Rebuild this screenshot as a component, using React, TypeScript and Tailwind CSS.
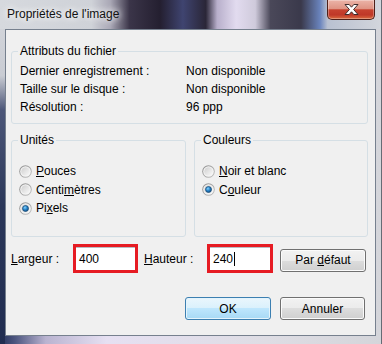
import { useId } from 'react';

const infoRows = [
  { label: 'Dernier enregistrement :', value: 'Non disponible' },
  { label: 'Taille sur le disque :', value: 'Non disponible' },
  { label: 'Résolution :', value: '96 ppp' },
];

function Radio({ checked }: { checked?: boolean }) {
  const id = useId().replace(/:/g, '');
  return (
    <svg width="13" height="13" viewBox="0 0 13 13" className="shrink-0">
      <defs>
        <linearGradient id={`${id}o`} x1="0" y1="0" x2="1" y2="1">
          <stop offset="0" stopColor="#8c8c8c" />
          <stop offset="1" stopColor="#c4c4c4" />
        </linearGradient>
        <linearGradient id={`${id}i`} x1="0" y1="0" x2="1" y2="1">
          <stop offset="0" stopColor="#cfcfcf" />
          <stop offset="1" stopColor="#fafafa" />
        </linearGradient>
        <radialGradient id={`${id}d`} cx="0.4" cy="0.35" r="0.7">
          <stop offset="0" stopColor="#86d4ff" />
          <stop offset="0.5" stopColor="#2783c9" />
          <stop offset="1" stopColor="#0e4a7e" />
        </radialGradient>
      </defs>
      <circle cx="6.5" cy="6.5" r="6.3" fill={`url(#${id}o)`} />
      <circle cx="6.5" cy="6.5" r="5.3" fill="#f6f6f6" />
      <circle cx="6.5" cy="6.5" r="4.3" fill={`url(#${id}i)`} />
      {checked && (
        <circle cx="6.5" cy="6.5" r="3" fill={`url(#${id}d)`} stroke="#1a4a74" strokeWidth="0.7" />
      )}
    </svg>
  );
}

function GroupBox({
  title,
  className = '',
  children,
}: {
  title: string;
  className?: string;
  children: React.ReactNode;
}) {
  return (
    <fieldset className={`min-w-0 rounded-[3px] border border-[#d5dfe5] pl-[6px] pr-2 ${className}`}>
      <legend className="px-[2px] leading-[15px]">{title}</legend>
      {children}
    </fieldset>
  );
}

function RadioRow({ checked, children }: { checked?: boolean; children: React.ReactNode }) {
  return (
    <div className="flex h-[18.5px] items-center gap-[4px] pl-[1px]">
      <Radio checked={checked} />
      <span>{children}</span>
    </div>
  );
}

function Button({
  primary,
  className = '',
  children,
}: {
  primary?: boolean;
  className?: string;
  children: React.ReactNode;
}) {
  return (
    <div
      className={`flex h-[23px] items-center justify-center rounded-[3px] border ${
        primary
          ? 'border-[#3c7fb1] bg-[linear-gradient(180deg,#eaf6fd_0%,#d9f0fc_50%,#bee6fd_50%,#a7d9f5_100%)] shadow-[inset_0_0_0_1px_#e4f4fc]'
          : 'border-[#707070] bg-[linear-gradient(180deg,#f2f2f2_0%,#ebebeb_50%,#dddddd_50%,#cfcfcf_100%)] shadow-[inset_0_0_0_1px_#fbfbfb]'
      } ${className}`}
    >
      <span>{children}</span>
    </div>
  );
}

function Field({ value, caret, className = '' }: { value: string; caret?: boolean; className?: string }) {
  return (
    <div
      className={`flex h-[29px] items-center border-[3px] border-[#e61b23] bg-white pl-[3px] shadow-[inset_0_1px_0_#b9bcc3] ${className}`}
    >
      <span>{value}</span>
      {caret && <span className="ml-[1px] inline-block h-[14px] w-px bg-black" />}
    </div>
  );
}

export default function App() {
  return (
    <div className="h-[344px] w-[382px] overflow-hidden border-r border-[#666b75] font-['Liberation_Sans',Arial,sans-serif] text-[12px] text-black [background:linear-gradient(180deg,#d6d8dd_0%,#c9ccd3_22%,#4c5678_32%,#2b3759_60%,#202c50_100%)_left_top/5px_100%_no-repeat,linear-gradient(90deg,#25325a_0%,#4d5680_4%,#b9b3d0_12%,#e6e0f2_28%,#dedde4_70%,#d4d5da_100%)]">
      <div className="flex h-[29px] items-start justify-between bg-[linear-gradient(90deg,#d6d9de_0%,#cfd2d8_24%,#a9a7b5_29%,#3b3549_34%,#241f30_42%,#3f4470_48%,#2a2637_54%,#b8afcb_57%,#e2dbef_62%,#cfcadb_67%,#4a4859_71%,#3a394b_79%,#6a84bd_84%,#b9c1d1_86%,#d3d6dc_100%)]">
        <span className="pl-[7px] pt-[7px] leading-[15px] text-[#111] [text-shadow:0_0_6px_#fff,0_0_10px_#fff]">
          Propriétés de l'image
        </span>
        <div className="mr-[6px] flex h-[20px] w-[48px] items-center justify-center rounded-b-[5px] border border-t-0 border-[#4e2019] bg-[linear-gradient(180deg,#ebb4a8_0%,#df9484_45%,#c6422f_52%,#bf3828_78%,#d96b3f_100%)] shadow-[inset_0_0_0_1px_rgba(255,255,255,0.3)]">
          <svg width="15" height="11" viewBox="0 0 15 11">
            <path
              d="M1 0.5H5.2L7.5 3.2L9.8 0.5H14L9.6 5.5L14 10.5H9.8L7.5 7.8L5.2 10.5H1L5.4 5.5Z"
              fill="#fff"
              stroke="#3e2c2c"
              strokeWidth="1"
              strokeLinejoin="round"
            />
          </svg>
        </div>
      </div>

      <div className="ml-[5px] flex h-[307px] w-[371px] flex-col border border-[#76808e] bg-[#f0f0f0]">
        <div className="mt-[14px] pl-[5px]">
          <GroupBox title="Attributs du fichier" className="w-[357px] pb-[7px] pt-[3px]">
            {infoRows.map((row) => (
              <div key={row.label} className="flex h-[18px] items-center pl-[2px]">
                <span className="w-[166px]">{row.label}</span>
                <span>{row.value}</span>
              </div>
            ))}
          </GroupBox>
        </div>

        <div className="mt-[9px] grid grid-cols-[175px_174px] gap-x-[8px] pl-[5px]">
          <GroupBox title="Unités" className="pb-[18px] pt-[14px]">
            <RadioRow>
              <u>P</u>ouces
            </RadioRow>
            <RadioRow>
              Centi<u>m</u>ètres
            </RadioRow>
            <RadioRow checked>
              Pi<u>x</u>els
            </RadioRow>
          </GroupBox>
          <GroupBox title="Couleurs" className="pb-[18px] pt-[14px]">
            <RadioRow>
              <u>N</u>oir et blanc
            </RadioRow>
            <RadioRow checked>
              C<u>o</u>uleur
            </RadioRow>
          </GroupBox>
        </div>

        <div className="mt-[7.5px] flex items-center pl-[5px]">
          <span className="w-[62px]">
            <u>L</u>argeur :
          </span>
          <Field value="400" className="w-[65px]" />
          <span className="ml-[6px] w-[63px]">
            <u>H</u>auteur :
          </span>
          <Field value="240" caret className="w-[66px]" />
          <Button className="ml-[7px] mt-[3px] w-[86px]">
            Par <u>d</u>éfaut
          </Button>
        </div>

        <div className="mt-[24px] flex justify-end gap-[9px] pr-[10px]">
          <Button primary className="w-[86px]">
            OK
          </Button>
          <Button className="w-[85px]">Annuler</Button>
        </div>
      </div>
    </div>
  );
}
